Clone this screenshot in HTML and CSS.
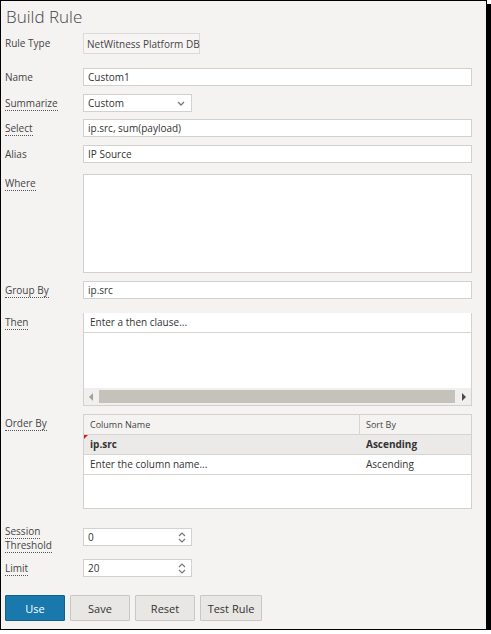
FILE: index.html
```html
<!DOCTYPE html>
<html lang="en">

<head>
    <meta charset="UTF-8" />
    <title>Build Rule</title>
    <link rel="stylesheet" href="styles.css">
</head>

<body>
    <div class="panel">
        <h1 class="title">Build Rule</h1>

        <div class="row first">
            <label class="lbl tall">Rule Type</label>
            <div class="readonly">NetWitness Platform DB</div>
        </div>

        <div class="row gap-lg">
            <label class="lbl">Name</label>
            <div class="field">Custom1</div>
        </div>

        <div class="row">
            <label class="lbl"><span class="tip">Summarize</span></label>
            <div class="field short">
                Custom
                <svg class="chev" width="8" height="5" viewBox="0 0 8 5">
                    <path d="M1 1 L4 4 L7 1" fill="none" stroke="#777" stroke-width="1.3" />
                </svg>
            </div>
        </div>

        <div class="row gap-sm">
            <label class="lbl"><span class="tip">Select</span></label>
            <div class="field">ip.src, sum(payload)</div>
        </div>

        <div class="row">
            <label class="lbl">Alias</label>
            <div class="field">IP Source</div>
        </div>

        <div class="row gap-md">
            <label class="lbl"><span class="tip">Where</span></label>
            <div class="field area"></div>
        </div>

        <div class="row">
            <label class="lbl"><span class="tip">Group By</span></label>
            <div class="field">ip.src</div>
        </div>

        <div class="row gap-lg">
            <label class="lbl"><span class="tip">Then</span></label>
            <div class="editor">
                <div class="editor-head">Enter a then clause...</div>
                <div class="editor-body"></div>
                <div class="hscroll">
                    <span class="arrow left"></span>
                    <span class="thumb"></span>
                    <span class="arrow right"></span>
                </div>
            </div>
        </div>

        <div class="row">
            <label class="lbl"><span class="tip">Order By</span></label>
            <div class="grid">
                <div class="grid-row head">
                    <div class="cell name">Column Name</div>
                    <div class="cell sort">Sort By</div>
                </div>
                <div class="grid-row sel">
                    <div class="cell name dirty">ip.src</div>
                    <div class="cell sort">Ascending</div>
                </div>
                <div class="grid-row">
                    <div class="cell name">Enter the column name...</div>
                    <div class="cell sort">Ascending</div>
                </div>
            </div>
        </div>

        <div class="row gap-xl">
            <label class="lbl two-line"><span class="tip">Session</span><br><span class="tip">Threshold</span></label>
            <div class="field short">
                0
                <svg class="spin" width="8" height="11" viewBox="0 0 8 11">
                    <path d="M1 4 L4 1 L7 4 M1 7 L4 10 L7 7" fill="none" stroke="#777" stroke-width="1.2" />
                </svg>
            </div>
        </div>

        <div class="row gap-sm">
            <label class="lbl"><span class="tip">Limit</span></label>
            <div class="field short">
                20
                <svg class="spin" width="8" height="11" viewBox="0 0 8 11">
                    <path d="M1 4 L4 1 L7 4 M1 7 L4 10 L7 7" fill="none" stroke="#777" stroke-width="1.2" />
                </svg>
            </div>
        </div>

        <div class="actions">
            <button class="btn primary">Use</button>
            <button class="btn">Save</button>
            <button class="btn">Reset</button>
            <button class="btn">Test Rule</button>
        </div>
    </div>
</body>

</html>
```

FILE: styles.css
```css
body {
    margin: 0;
    background: #fff;
    font-family: 'Open Sans', 'Liberation Sans', sans-serif;
    color: #333;
}

.panel {
    box-sizing: border-box;
    width: 487px;
    height: 630px;
    border: 1px solid #000;
    box-shadow: 4px 4px 0 #000;
    background: #f4f3f1;
    padding: 4px 14px 0 4px;
}

.title {
    margin: 0 0 0 1px;
    font-size: 17px;
    font-weight: 300;
    line-height: 24px;
    color: #444;
}

.row {
    display: flex;
    align-items: flex-start;
    margin-top: 8px;
}

.row.first { margin-top: 4px; }
.row.gap-sm { margin-top: 7px; }
.row.gap-md { margin-top: 11px; }
.row.gap-lg { margin-top: 14px; }
.row.gap-xl { margin-top: 19px; }

.lbl {
    flex: 0 0 78px;
    font-size: 10px;
    line-height: 18px;
    color: #444;
}

.lbl.tall {
    line-height: 21px;
}

.lbl.two-line {
    line-height: 14px;
    margin-top: -4px;
}

.tip {
    border-bottom: 1px dotted #555;
}

.field,
.readonly {
    box-sizing: border-box;
    display: flex;
    align-items: center;
    position: relative;
    height: 18px;
    width: 390px;
    padding: 0 4px;
    font-size: 10px;
    background: #fff;
    border: 1px solid #d3d1cd;
}

.readonly {
    width: 117px;
    height: 21px;
    padding: 0 3px;
    background: #f6f5f3;
    border-color: #dcdad6;
    color: #444;
    white-space: nowrap;
}

.field.short {
    width: 109px;
}

.field.area {
    height: 99px;
}

.chev {
    position: absolute;
    right: 6px;
    top: 6px;
}

.spin {
    position: absolute;
    right: 5px;
    top: 3px;
}

/* then clause editor */
.editor {
    box-sizing: border-box;
    width: 390px;
    height: 93px;
    border: 1px solid #d3d1cd;
    border-top: none;
    background: #fff;
    display: flex;
    flex-direction: column;
}

.editor-head {
    height: 19px;
    line-height: 19px;
    padding-left: 6px;
    font-size: 10px;
    border-bottom: 1px solid #d7d5d1;
}

.editor-body {
    flex: 1;
}

.hscroll {
    height: 17px;
    background: #f0efed;
    display: flex;
    align-items: center;
}

.thumb {
    flex: 1;
    height: 13px;
    background: #c5c2bc;
}

.arrow {
    width: 0;
    height: 0;
    border-top: 4px solid transparent;
    border-bottom: 4px solid transparent;
    margin: 0 6px 0 5px;
}

.arrow.left {
    border-right: 4px solid #a3a09b;
}

.arrow.right {
    border-left: 4px solid #4a4a4a;
    margin: 0 5px 0 7px;
}

/* order by grid */
.grid {
    box-sizing: border-box;
    width: 390px;
    height: 95px;
    border: 1px solid #d3d1cd;
    background: #fff;
}

.grid-row {
    display: flex;
    height: 19px;
    border-bottom: 1px solid #d7d5d1;
    font-size: 10px;
}

.grid-row.head {
    background: #f4f3f1;
    font-size: 9px;
    color: #444;
}

.grid-row.sel {
    background: #ebeae8;
    font-weight: 700;
}

.cell {
    line-height: 19px;
    padding-left: 6px;
    position: relative;
}

.cell.name {
    flex: 0 0 276px;
    box-sizing: border-box;
}

.head .cell.name {
    border-right: 1px solid #d7d5d1;
}

.cell.dirty::before {
    content: '';
    position: absolute;
    left: 0;
    top: 0;
    border-top: 4px solid #d21f1f;
    border-right: 4px solid transparent;
}

/* buttons */
.actions {
    display: flex;
    gap: 5px;
    margin-top: 18px;
}

.btn {
    width: 60px;
    height: 26px;
    padding: 0;
    font-family: 'Open Sans', 'Liberation Sans', sans-serif;
    font-size: 11px;
    color: #333;
    background: #e8e7e4;
    border: 1px solid #c9c7c3;
    border-radius: 1px;
}

.btn.primary {
    background: #1979ad;
    border-color: #115f8a;
    color: #fff;
}

.btn:last-child {
    width: 62px;
}
```
